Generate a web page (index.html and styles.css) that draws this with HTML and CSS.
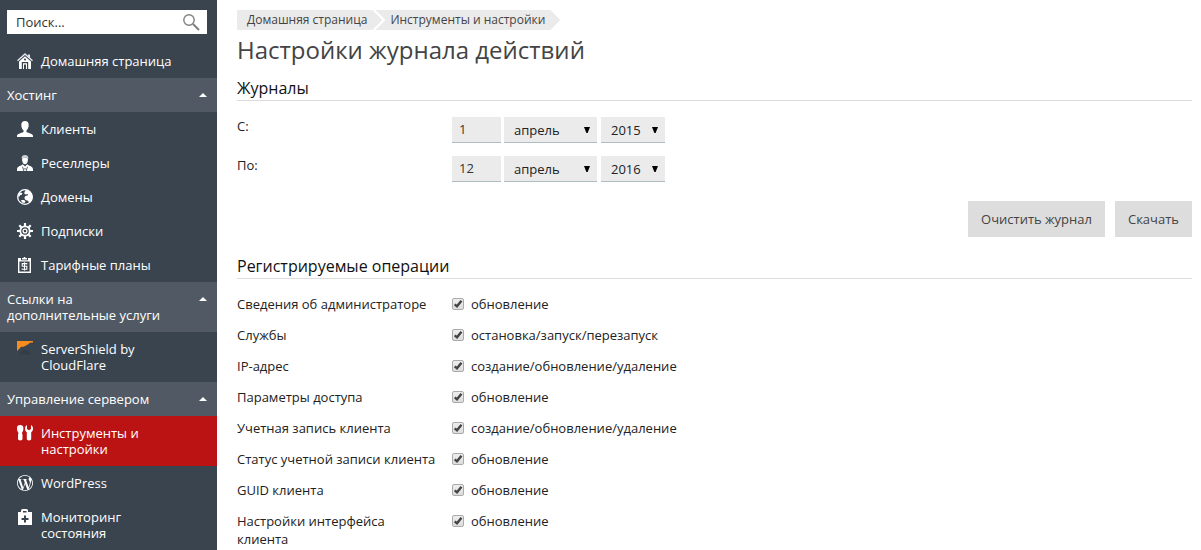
FILE: index.html
```html
<!DOCTYPE html>
<html lang="ru">
<head>
<meta charset="utf-8">
<meta name="viewport" content="width=device-width, initial-scale=1">
<title>Настройки журнала действий</title>
<link rel="stylesheet" href="styles.css">
</head>
<body>
<div class="page">
  <aside class="sidebar">
    <form class="search">
      <input class="search-input" type="text" value="Поиск..." aria-label="Поиск">
      <button class="search-button" type="button" aria-label="Найти">
        <svg viewBox="0 0 17 17" width="17" height="17" fill="none" stroke="#808080"><circle cx="6" cy="6" r="5.2" stroke-width="1.4"/><path d="M10 10l6 6" stroke-width="2"/></svg>
      </button>
    </form>
    <nav>
      <a class="nav-item" href="#">
        <svg class="icon" viewBox="0 0 16 16"><path d="M8 0L0 7.2l1 1L8 2l7 6.2 1-1-3-2.7V1.5h-2v1.2z" opacity=".85"/><path fill-rule="evenodd" d="M8 3.300L2 8.600V16h12V8.600zM8 5.300l1.300 1.200L8 7.700 6.700 6.500zM4.800 9h6.400v7H10v-5.800H6V16H4.800zM7 11.500h2V16H7z"/></svg>
        <span>Домашняя страница</span>
      </a>
      <button class="nav-group" type="button"><span>Хостинг</span><i class="caret"></i></button>
      <a class="nav-item" href="#">
        <svg class="icon" viewBox="0 0 16 16"><path d="M8 0C5.600 0 4.300 1.600 4.300 4c0 2.500 1 4.300 2.200 5.300v1.500c0 1.200-6.500 1.400-6.500 4V16h16v-1.200c0-2.600-6.500-2.800-6.500-4V9.300C10.700 8.300 11.700 6.500 11.700 4 11.700 1.600 10.400 0 8 0z"/></svg>
        <span>Клиенты</span>
      </a>
      <a class="nav-item" href="#">
        <svg class="icon" viewBox="0 0 16 16"><path d="M4.700 3.600C4.300 1.300 5.800 0 8 0s3.700 1.300 3.300 3.600C10 2.400 6.500 2.400 4.700 3.600z" opacity=".75"/><path d="M5 3.500c1.800-1 4.200-1 6 0 0 3.500-1.200 5.800-3 5.800S5 7 5 3.500z"/><path fill-rule="evenodd" d="M5.700 9.200L8 11.500l2.300-2.300c.8 1.700 5.700 1.500 5.700 5.300V16H0v-1.500c0-3.800 4.900-3.600 5.700-5.300zM5 11.500L6.500 16h.8L6 12zM11 11.500L9.500 16h-.8L10 12zM7.500 13h1v1.500h-1z"/></svg>
        <span>Реселлеры</span>
      </a>
      <a class="nav-item" href="#">
        <svg class="icon" viewBox="0 0 16 16"><circle cx="8" cy="8" r="7.300" fill="none" stroke="#fff" stroke-width="1.300"/><path d="M9 .8c3.800.3 6.500 3.400 6.500 7.200 0 2.500-1.200 4.800-3.200 6.100l-1.300-2.300-2.500-.8L7.300 9l1-2 2.700-.7-.3-1.300-1.700.5L7.300 4.800 7.500 3z"/><path d="M1 7l1.300-3 1.700-.5 1.500.8-1 1.700H3.300L2 8zM4 11h3l1.500 1.300-1 1.700-2.500-.5z"/></svg>
        <span>Домены</span>
      </a>
      <a class="nav-item" href="#">
        <svg class="icon" viewBox="0 0 16 16" stroke="#fff"><g stroke-width="2.200"><path d="M8 0v4M8 12v4M0 8h4M12 8h4M2.300 2.300L5 5M11 11l2.700 2.700M2.300 13.700L5 11M11 5l2.700-2.700"/></g><circle cx="8" cy="8" r="4.700" fill="none" stroke-width="1.800"/><circle cx="8" cy="8" r="1.900" fill="none" stroke-width="1.300"/></svg>
        <span>Подписки</span>
      </a>
      <a class="nav-item" href="#">
        <svg class="icon" viewBox="0 0 16 16"><path fill-rule="evenodd" d="M1 1h3v2.300h7V1h3v15H1zM2.400 4.500v10.100h10.200V4.500z"/><path d="M5 1h1.700V0h1.600v1H10v1.500H5z"/><path d="M9.800 7.500V6.600H5.200v2.700h4.600v3H5.200v-.9M7.500 5.300v8.200" fill="none" stroke="#fff" stroke-width="1.100"/></svg>
        <span>Тарифные планы</span>
      </a>
      <button class="nav-group" type="button"><span>Ссылки на дополнительные услуги</span><i class="caret"></i></button>
      <a class="nav-item" href="#">
        <svg class="icon" viewBox="0 0 16 16"><path fill="#f78b1f" d="M0 0h16v1.500c-2 0-3.500.3-4.500 1.500-1 .8-2 1.500-3.500 2-1 .7-2 .8-3.500.8C3 6.500 3 7.500 2 8L0 10z"/><path fill="#353e47" d="M2 13.500c-.3-2 1-3 2.700-3C5.500 8.500 9 8 10 10c2-.5 3 .5 3 2 1 .2 1.500.8 1.500 1.500z"/></svg>
        <span>ServerShield by CloudFlare</span>
      </a>
      <button class="nav-group" type="button"><span>Управление сервером</span><i class="caret"></i></button>
      <a class="nav-item nav-item-active" href="#">
        <svg class="icon" viewBox="0 0 16 16"><path d="M0 3c0-2 1-3 3.200-3s3.200 1 3.200 3c0 2-.4 3.700-1.400 4.700v.8c.5.700.6 1.200.5 2V13.800c0 1.100-.9 1.700-2.200 1.700S1 14.900 1 13.800v-3.300c-.1-.8 0-1.300.4-2v-.8C.4 6.700 0 5 0 3z"/><path d="M10 0v4l2 1.300L14 4V0c1.400.8 2 2 2 3.500 0 1.800-.6 3-1.800 3.800v6.500c0 1.100-.9 1.700-2.200 1.700s-2.200-.6-2.200-1.700V7.300C8.600 6.500 8 5.300 8 3.500 8 2 8.600.8 10 0z"/></svg>
        <span>Инструменты и настройки</span>
      </a>
      <a class="nav-item" href="#">
        <svg class="icon" viewBox="0 0 24 24"><path d="M21.469 6.825c.84 1.537 1.318 3.300 1.318 5.175 0 3.979-2.156 7.456-5.363 9.325l3.295-9.527c.615-1.540.820-2.771.820-3.864 0-.405-.026-.780-.070-1.110m-7.981.105c.647-.030 1.232-.105 1.232-.105.582-.075.514-.930-.067-.899 0 0-1.755.135-2.880.135-1.064 0-2.850-.150-2.850-.150-.585-.030-.661.855-.075.885 0 0 .540.061 1.125.090l1.680 4.605-2.370 7.080L5.354 6.900c.649-.030 1.234-.100 1.234-.100.585-.075.516-.930-.065-.896 0 0-1.746.138-2.874.138-.200 0-.438-.008-.690-.015C4.911 3.150 8.235 1.215 12 1.215c2.809 0 5.365 1.072 7.286 2.833-.046-.003-.091-.009-.141-.009-1.060 0-1.812.923-1.812 1.914 0 .890.513 1.643 1.060 2.531.411.720.890 1.643.890 2.977 0 .915-.354 1.994-.821 3.479l-1.075 3.585-3.900-11.610.001.015zM12 22.784c-1.059 0-2.081-.153-3.048-.437l3.237-9.406 3.315 9.087c.024.053.050.101.078.149-1.120.393-2.325.609-3.582.609M1.211 12c0-1.564.336-3.050.935-4.390L7.290 21.709C3.694 19.960 1.212 16.271 1.211 12M12 0C5.385 0 0 5.385 0 12s5.385 12 12 12 12-5.385 12-12S18.615 0 12 0"/></svg>
        <span>WordPress</span>
      </a>
      <a class="nav-item" href="#">
        <svg class="icon" viewBox="0 0 16 16"><path fill-rule="evenodd" d="M4 3V1.500Q4 0 5.500 0h4Q11 0 11 1.500V3h4v13H1V3zM6 2v1.500h3.500V2zM7 6.500V9H4.500v2H7v2.500h2V11h2.500V9H9V6.500z"/></svg>
        <span>Мониторинг состояния</span>
      </a>
    </nav>
  </aside>

  <main class="main">
    <nav class="crumbs">
      <a class="crumb crumb-first" href="#">Домашняя страница</a>
      <a class="crumb crumb-next" href="#">Инструменты и настройки</a>
    </nav>
    <h1 class="title">Настройки журнала действий</h1>

    <section>
      <h2 class="section-title">Журналы</h2>
      <div class="date-row">
        <label for="from-day">С:</label>
        <div class="date-fields">
          <input class="field day" id="from-day" type="text" value="1">
          <span class="select-box"><select class="field month" aria-label="Месяц начала"><option>апрель</option></select></span>
          <span class="select-box"><select class="field year" aria-label="Год начала"><option>2015</option></select></span>
        </div>
      </div>
      <div class="date-row">
        <label for="to-day">По:</label>
        <div class="date-fields">
          <input class="field day" id="to-day" type="text" value="12">
          <span class="select-box"><select class="field month" aria-label="Месяц окончания"><option>апрель</option></select></span>
          <span class="select-box"><select class="field year" aria-label="Год окончания"><option>2016</option></select></span>
        </div>
      </div>
      <div class="actions">
        <button class="button" type="button">Очистить журнал</button>
        <button class="button" type="button">Скачать</button>
      </div>
    </section>

    <section>
      <h2 class="section-title">Регистрируемые операции</h2>
      <div class="op-row"><span>Сведения об администраторе</span><label class="op"><input class="check" type="checkbox" checked>обновление</label></div>
      <div class="op-row"><span>Службы</span><label class="op"><input class="check" type="checkbox" checked>остановка/запуск/перезапуск</label></div>
      <div class="op-row"><span>IP-адрес</span><label class="op"><input class="check" type="checkbox" checked>создание/обновление/удаление</label></div>
      <div class="op-row"><span>Параметры доступа</span><label class="op"><input class="check" type="checkbox" checked>обновление</label></div>
      <div class="op-row"><span>Учетная запись клиента</span><label class="op"><input class="check" type="checkbox" checked>создание/обновление/удаление</label></div>
      <div class="op-row"><span>Статус учетной записи клиента</span><label class="op"><input class="check" type="checkbox" checked>обновление</label></div>
      <div class="op-row"><span>GUID клиента</span><label class="op"><input class="check" type="checkbox" checked>обновление</label></div>
      <div class="op-row"><span>Настройки интерфейса клиента</span><label class="op"><input class="check" type="checkbox" checked>обновление</label></div>
    </section>
  </main>
</div>
</body>
</html>
```
FILE: styles.css
```css
* { box-sizing: border-box; }

body {
  margin: 0;
  background: #fff;
  color: #222;
  font: 13px/18px "Open Sans", "Noto Sans", sans-serif;
}

input, select, button { font: inherit; color: inherit; border-radius: 0; }

.page { display: flex; min-height: 100vh; }

/* Sidebar */
.sidebar { flex: none; width: 217px; background: #39444f; color: #fff; }

.search { display: flex; height: 24px; margin: 10px; margin-left: 7px; background: #fff; }
.search-input {
  flex: 1;
  min-width: 0;
  padding: 0 0 0 9px;
  border: 0;
  background: none;
  color: #333;
}
.search-button {
  display: flex;
  align-items: center;
  padding: 0 7px;
  border: 0;
  background: none;
}

.nav-item {
  display: flex;
  gap: 8px;
  padding: 9px 50px 9px 17px;
  color: #fff;
  font-weight: 500;
  line-height: 16px;
  text-decoration: none;
}
.nav-item:first-child { padding-right: 0; }
.nav-item-active { background: #bb1313; }
.icon { flex: none; width: 16px; height: 16px; fill: #fff; }

.nav-group {
  display: flex;
  justify-content: space-between;
  width: 100%;
  padding: 9px 10px 9px 7px;
  border: 0;
  background: #515a64;
  color: #fff;
  font-weight: 500;
  line-height: 16px;
  text-align: left;
}
.nav-group span { max-width: 170px; }
.caret {
  width: 8px;
  height: 4px;
  margin-top: 6px;
  background: #fff;
  clip-path: polygon(50% 0, 100% 100%, 0 100%);
}

/* Content */
.main { flex: 1; min-width: 0; padding: 10px 9px 0 20px; }

.crumbs { display: flex; font-size: 12px; line-height: 20px; }
.crumb { background: #ebebeb; color: #444; text-decoration: none; }
.crumb-first {
  padding: 0 15px 0 10px;
  clip-path: polygon(0 0, calc(100% - 10px) 0, 100% 50%, calc(100% - 10px) 100%, 0 100%);
}
.crumb-next {
  margin-left: -7px;
  padding: 0 15px;
  clip-path: polygon(0 0, calc(100% - 10px) 0, 100% 50%, calc(100% - 10px) 100%, 0 100%, 10px 50%);
}

.title { margin: 4px 0 12px; color: #444; font-size: 24px; font-weight: 400; line-height: 32px; }

.section-title {
  margin: 0 0 16px;
  padding-bottom: 2px;
  border-bottom: 1px solid #dcdcdc;
  color: #111;
  font-size: 16px;
  font-weight: 400;
  line-height: 20px;
}

.date-row, .op-row { display: grid; grid-template-columns: 200px 1fr; column-gap: 15px; margin-bottom: 13px; }

.date-fields { display: flex; gap: 3px; }
.field {
  height: 26px;
  padding: 0;
  border: 0;
  border-bottom: 1px solid #afbcc3;
  background: #ebebeb;
}
.day { width: 49px; padding: 0 0 1px 7px; color: #333; }
.select-box { position: relative; display: flex; }
.select-box + .select-box { margin-left: 1px; }
.select-box select { appearance: none; padding-left: 10px; color: #222; }
.select-box::after {
  content: "";
  position: absolute;
  top: 10px;
  right: 7px;
  width: 6px;
  height: 6px;
  background: #000;
  clip-path: polygon(0 0, 100% 0, 60% 100%, 40% 100%);
  pointer-events: none;
}
.month { width: 93px; }
.year { width: 64px; }

.actions { display: flex; justify-content: flex-end; gap: 10px; margin: 19px 0; }
.button { height: 36px; padding: 0 13px; border: 0; background: #ddd; color: #444; }

.op-row { align-items: start; }
.op { display: flex; align-items: center; gap: 7px; }
.check {
  appearance: none;
  width: 12px;
  height: 12px;
  margin: 0;
  border: 1px solid #aaa;
  border-radius: 2px;
  background: linear-gradient(#eee, #ddd);
}
.check:checked {
  background: url("data:image/svg+xml,%3Csvg xmlns='http://www.w3.org/2000/svg' viewBox='0 0 10 10'%3E%3Cpath d='M1.700 5.300l2.300 2L8.500 1.700' fill='none' stroke='%23444' stroke-width='2.400'/%3E%3C/svg%3E"), linear-gradient(#eee, #ddd);
}
```
